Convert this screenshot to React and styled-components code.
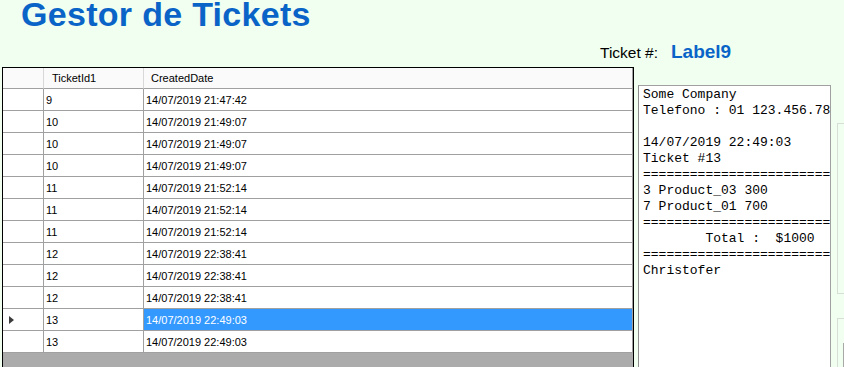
import React from "react";
import styled, { createGlobalStyle } from "styled-components";

const Global = createGlobalStyle`
  html, body { margin: 0; padding: 0; background: #f0fff0; }
  body { font-family: "Liberation Sans", Arial, sans-serif; }
`;

const Page = styled.div`
  width: 844px;
  height: 367px;
  overflow: hidden;
  background: #f0fff0;
  display: flex;
  flex-direction: column;
`;

const Title = styled.h1`
  flex: none;
  margin: 0;
  padding-left: 21px;
  height: 28px;
  line-height: 28px;
  font-size: 34px;
  letter-spacing: 0.3px;
  font-weight: bold;
  color: #0a64c8;
  white-space: nowrap;
`;

const LabelRow = styled.div`
  flex: none;
  box-sizing: border-box;
  height: 39px;
  padding: 14px 0 0 600px;
  display: flex;
  align-items: baseline;
  gap: 13px;
`;

const LabelText = styled.span`
  font-size: 15.5px;
  line-height: 1;
  color: #000;
`;

const LabelValue = styled.span`
  font-size: 19px;
  line-height: 1;
  font-weight: bold;
  color: #0a64c8;
`;

const Main = styled.div`
  flex: none;
  display: flex;
  align-items: flex-start;
  padding-left: 2px;
`;

const GridBox = styled.div`
  width: 632px;
  height: 310px;
  box-sizing: border-box;
  border: 1px solid #000;
  background: #ababab;
  flex: none;
  font-size: 11px;
  color: #000;
`;

const GridRow = styled.div`
  display: grid;
  grid-template-columns: 41px 100px 489px;
  height: ${(p) => (p.$header ? 21 : 22)}px;
`;

const HeadCell = styled.div`
  box-sizing: border-box;
  background: #fafafa;
  border-bottom: 1px solid #a0a0a0;
  border-right: 1px solid ${(p) => (p.$last ? "#a0a0a0" : "#d8d8d8")};
  padding-left: ${(p) => p.$pad || 0}px;
  display: flex;
  align-items: center;
`;

const RowHead = styled.div`
  box-sizing: border-box;
  background: #fff;
  border-bottom: 1px solid #a0a0a0;
  border-right: 1px solid #a0a0a0;
  display: flex;
  align-items: center;
  padding-left: 6px;
`;

const Cell = styled.div`
  box-sizing: border-box;
  background: ${(p) => (p.$selected ? "#3399ff" : "#fff")};
  color: ${(p) => (p.$selected ? "#fff" : "#000")};
  border-bottom: 1px solid #a0a0a0;
  border-right: 1px solid #a0a0a0;
  padding-left: 2px;
  display: flex;
  align-items: center;
  white-space: nowrap;
`;

const Marker = styled.svg`
  width: 6px;
  height: 8px;
  display: block;
`;

const TicketPanel = styled.pre`
  margin: 18px 0 0 4px;
  box-sizing: border-box;
  width: 193px;
  height: 300px;
  flex: none;
  background: #fff;
  border: 1px solid #a0a0a0;
  border-left-color: #8c8c8c;
  padding: 1px 2px 0 4px;
  overflow: hidden;
  font-family: "Liberation Mono", "Courier New", monospace;
  font-size: 13px;
  line-height: 16px;
  color: #000;
  white-space: pre;
`;

const SideColumn = styled.div`
  margin-left: 6px;
  flex: 1;
  display: flex;
  flex-direction: column;
`;

const GroupBox = styled.div`
  box-sizing: border-box;
  margin-top: ${(p) => p.$top}px;
  height: ${(p) => p.$height}px;
  width: 40px;
  border: 1px solid #d6ded6;
  border-right: none;
  padding: ${(p) => p.$pad || 0}px 0 0 5px;
`;

const InnerBox = styled.div`
  height: 40px;
  border-left: 1px solid #a8a8a8;
  border-top: 1px solid #a8a8a8;
`;

const rows = [
  ["9", "14/07/2019 21:47:42"],
  ["10", "14/07/2019 21:49:07"],
  ["10", "14/07/2019 21:49:07"],
  ["10", "14/07/2019 21:49:07"],
  ["11", "14/07/2019 21:52:14"],
  ["11", "14/07/2019 21:52:14"],
  ["11", "14/07/2019 21:52:14"],
  ["12", "14/07/2019 22:38:41"],
  ["12", "14/07/2019 22:38:41"],
  ["12", "14/07/2019 22:38:41"],
  ["13", "14/07/2019 22:49:03"],
  ["13", "14/07/2019 22:49:03"],
];
const selectedIndex = 10;

const eq = "=".repeat(30);
const ticketText = [
  "Some Company",
  "Telefono : 01 123.456.789",
  "",
  "14/07/2019 22:49:03",
  "Ticket #13",
  eq,
  "3 Product_03 300",
  "7 Product_01 700",
  eq,
  "        Total :  $1000",
  eq,
  "Christofer",
].join("\n");

export default function App() {
  return (
    <Page>
      <Global />
      <Title>Gestor de Tickets</Title>
      <LabelRow>
        <LabelText>Ticket #:</LabelText>
        <LabelValue>Label9</LabelValue>
      </LabelRow>
      <Main>
        <GridBox>
          <GridRow $header>
            <HeadCell />
            <HeadCell $pad={8}>TicketId1</HeadCell>
            <HeadCell $pad={7} $last>
              CreatedDate
            </HeadCell>
          </GridRow>
          {rows.map(([id, date], i) => (
            <GridRow key={i}>
              <RowHead>
                {i === selectedIndex && (
                  <Marker viewBox="0 0 6 8">
                    <path d="M0 0 L5 4 L0 8 Z" fill="#3c3c3c" />
                  </Marker>
                )}
              </RowHead>
              <Cell>{id}</Cell>
              <Cell $selected={i === selectedIndex}>{date}</Cell>
            </GridRow>
          ))}
        </GridBox>
        <TicketPanel>{ticketText}</TicketPanel>
        <SideColumn>
          <GroupBox $top={56} $height={171} />
          <GroupBox $top={24} $height={60} $pad={24}>
            <InnerBox />
          </GroupBox>
        </SideColumn>
      </Main>
    </Page>
  );
}
